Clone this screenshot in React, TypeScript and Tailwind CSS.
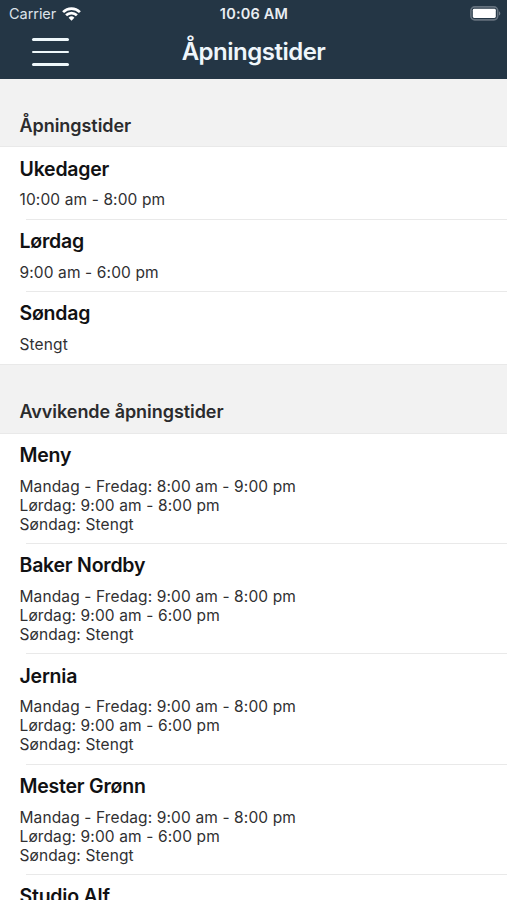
import React from 'react';

interface OpeningHours {
  id: number;
  name: string;
  hours: string[];
}

const regularHours: OpeningHours[] = [
  { id: 1, name: 'Ukedager', hours: ['10:00 am - 8:00 pm'] },
  { id: 2, name: 'Lørdag', hours: ['9:00 am - 6:00 pm'] },
  { id: 3, name: 'Søndag', hours: ['Stengt'] },
];

const storeHours: OpeningHours[] = [
  { id: 1, name: 'Meny', hours: ['Mandag - Fredag: 8:00 am - 9:00 pm', 'Lørdag: 9:00 am - 8:00 pm', 'Søndag: Stengt'] },
  { id: 2, name: 'Baker Nordby', hours: ['Mandag - Fredag: 9:00 am - 8:00 pm', 'Lørdag: 9:00 am - 6:00 pm', 'Søndag: Stengt'] },
  { id: 3, name: 'Jernia', hours: ['Mandag - Fredag: 9:00 am - 8:00 pm', 'Lørdag: 9:00 am - 6:00 pm', 'Søndag: Stengt'] },
  { id: 4, name: 'Mester Grønn', hours: ['Mandag - Fredag: 9:00 am - 8:00 pm', 'Lørdag: 9:00 am - 6:00 pm', 'Søndag: Stengt'] },
  { id: 5, name: 'Studio Alf', hours: [] },
];

const WifiIcon: React.FC = () => (
  <svg width="19" height="14" viewBox="0 0 19 14" fill="none" stroke="#fff" strokeWidth="2.7">
    <path d="M1.1 5.1a12 12 0 0 1 16.8 0" />
    <path d="M4.1 8.3a7.7 7.7 0 0 1 10.8 0" />
    <path d="M9.5 13.7 6.6 10.8a4.1 4.1 0 0 1 5.8 0Z" fill="#fff" stroke="none" />
  </svg>
);

const BatteryIcon: React.FC = () => (
  <svg width="31" height="15" viewBox="0 0 31 15" fill="none">
    <rect x="0.9" y="0.9" width="26.8" height="13" rx="3.8" stroke="#65727e" strokeWidth="1.6" />
    <rect x="2.8" y="2.8" width="23" height="9.2" rx="1.4" fill="#fff" />
    <path d="M29 5.2c1.8.7 1.8 3.7 0 4.4Z" fill="#737f8a" />
  </svg>
);

const Header: React.FC = () => (
  <header className="h-[79px] bg-[#243645] text-white">
    <div className="grid h-[27px] grid-cols-3 items-center pr-[6px] pl-[9px]">
      <div className="flex items-center gap-[6px] text-[14.5px] tracking-[-0.05px] text-[#dce3ea]">
        <span>Carrier</span>
        <WifiIcon />
      </div>
      <span className="pr-[2px] text-center text-[14.5px] font-semibold tracking-[0.2px] text-[#e9eef3]">10:06 AM</span>
      <div className="flex justify-end">
        <BatteryIcon />
      </div>
    </div>
    <div className="grid h-[50px] grid-cols-[1fr_auto_1fr] items-center">
      <button aria-label="Meny" className="ml-8 flex w-[37px] flex-col gap-[10px]">
        <span className="h-[2.5px] rounded-full bg-[#eef7fa]" />
        <span className="h-[2.5px] rounded-full bg-[#eef7fa]" />
        <span className="h-[2.5px] rounded-full bg-[#eef7fa]" />
      </button>
      <h1 className="pb-px text-[24px] leading-[46px] font-semibold tracking-[-0.5px] text-[#eff6fb]">Åpningstider</h1>
    </div>
  </header>
);

const SectionHeader: React.FC<{ title: string; className: string }> = ({ title, className }) => (
  <div className={`flex items-end border-b border-[#e9e9e9] bg-[#f2f2f2] pl-[19.5px] ${className}`}>
    <h2 className="text-[18px] leading-6 font-semibold tracking-[-0.05px] text-[#2b2b2d]">{title}</h2>
  </div>
);

const HoursList: React.FC<{ items: OpeningHours[] }> = ({ items }) => (
  <ul>
    {items.map((item) => (
      <li key={item.id} className="group">
        <div className="pt-[9.2px] pb-[9.4px] pl-[19.5px]">
          <h3 className="text-[19.5px] leading-6 font-semibold tracking-[-0.22px] text-[#111113]">{item.name}</h3>
          <div className="mt-[9.8px] text-[15.5px] leading-[19px] tracking-[0.12px] text-[#303032]">
            {item.hours.map((line) => (
              <p key={line}>{line}</p>
            ))}
          </div>
        </div>
        <div className="ml-[26px] h-px bg-[#e9e9e9] group-last:ml-0" />
      </li>
    ))}
  </ul>
);

const App: React.FC = () => {
  return (
    <div className="h-[900px] w-full overflow-hidden bg-white font-['Inter','Liberation_Sans',sans-serif]">
      <Header />
      <SectionHeader title="Åpningstider" className="h-[68.4px] pb-[8.5px]" />
      <HoursList items={regularHours} />
      <SectionHeader title="Avvikende åpningstider" className="h-[69.2px] pb-[8.6px]" />
      <HoursList items={storeHours} />
    </div>
  );
};

export default App;
